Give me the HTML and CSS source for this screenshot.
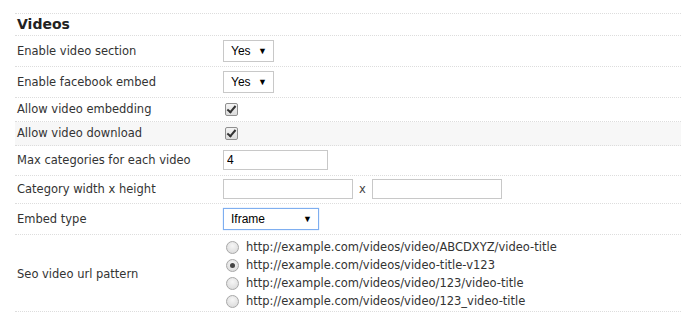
FILE: index.html
```html
<!DOCTYPE html>
<html>
<head>
    <title>Videos settings</title>
    <link rel="stylesheet" href="styles.css">
</head>
<body>
    <div class="settings">
        <h2 class="section-title">Videos</h2>

        <div class="row row-select">
            <div class="label">Enable video section</div>
            <div class="value">
                <div class="fake-select small"><span>Yes</span><span class="arrow">&#9660;</span></div>
            </div>
        </div>
        <div class="row row-select">
            <div class="label">Enable facebook embed</div>
            <div class="value">
                <div class="fake-select small"><span>Yes</span><span class="arrow">&#9660;</span></div>
            </div>
        </div>
        <div class="row row-check">
            <div class="label">Allow video embedding</div>
            <div class="value"><span class="checkbox checked"></span></div>
        </div>
        <div class="row row-check alt">
            <div class="label">Allow video download</div>
            <div class="value"><span class="checkbox checked"></span></div>
        </div>
        <div class="row row-input">
            <div class="label">Max categories for each video</div>
            <div class="value"><input type="text" class="text-input short" value="4"></div>
        </div>
        <div class="row row-input2">
            <div class="label">Category width x height</div>
            <div class="value">
                <input type="text" class="text-input medium">
                <span class="times">x</span>
                <input type="text" class="text-input medium">
            </div>
        </div>
        <div class="row row-select">
            <div class="label">Embed type</div>
            <div class="value">
                <div class="fake-select wide focused"><span>Iframe</span><span class="arrow">&#9660;</span></div>
            </div>
        </div>
        <div class="row row-radio">
            <div class="label">Seo video url pattern</div>
            <div class="value radios">
                <label class="radio-line"><span class="radio"></span>http://example.com/videos/video/ABCDXYZ/video-title</label>
                <label class="radio-line"><span class="radio selected"></span>http://example.com/videos/video-title-v123</label>
                <label class="radio-line"><span class="radio"></span>http://example.com/videos/video/123/video-title</label>
                <label class="radio-line"><span class="radio"></span>http://example.com/videos/video/123_video-title</label>
            </div>
        </div>
    </div>
</body>
</html>
```

FILE: styles.css
```css
body {
    margin: 0;
    padding: 13px 0 0 15px;
    font-family: "DejaVu Sans", Verdana, sans-serif;
    font-size: 11.5px;
    line-height: 13px;
    color: #333;
    background: #fff;
}
.settings {
    border-top: 1px dotted #ddd;
}
.section-title {
    margin: 0;
    height: 21px;
    padding-left: 2px;
    font-size: 14px;
    line-height: 21px;
    font-weight: bold;
    color: #222;
    border-bottom: 1px dotted #ddd;
}
.row {
    display: grid;
    grid-template-columns: 208px 1fr;
    align-items: center;
    border-bottom: 1px dotted #ddd;
}
.row.alt {
    background-color: #f7f7f7;
}
.label {
    padding-left: 2px;
}
.value {
    display: flex;
    align-items: center;
}
.row-select {
    padding: 4px 0;
}
.row-check {
    padding: 5px 0;
}
.row-input {
    padding: 4px 0 5px;
}
.row-input2 {
    padding: 3px 0 4px;
}
.row-radio {
    padding: 3px 0 1px;
}
.fake-select {
    box-sizing: border-box;
    height: 22px;
    display: flex;
    align-items: center;
    justify-content: space-between;
    padding: 0 6px 0 7px;
    border: 1px solid #c8c8c8;
    background: #fff;
    font-family: "Liberation Sans", Arial, sans-serif;
    font-size: 12px;
    color: #000;
}
.fake-select.small {
    width: 51px;
}
.fake-select.wide {
    width: 96px;
}
.fake-select.focused {
    border-color: #7eaef0;
    box-shadow: 0 0 1px #9cc2f5;
}
.arrow {
    font-size: 9px;
}
.checkbox {
    box-sizing: border-box;
    width: 13px;
    height: 13px;
    margin-left: 2px;
    border: 1px solid #8f8f8f;
    border-radius: 2px;
    background: linear-gradient(#f4f4f4, #dcdcdc);
    position: relative;
}
.checkbox.checked::after {
    content: "";
    position: absolute;
    left: 3px;
    top: 0px;
    width: 3px;
    height: 7px;
    border: solid #333;
    border-width: 0 2px 2px 0;
    transform: rotate(40deg);
}
.text-input {
    box-sizing: border-box;
    height: 20px;
    padding: 0 3px;
    border: 1px solid #c8c8c8;
    font-family: "Liberation Sans", Arial, sans-serif;
    font-size: 12px;
    color: #000;
    outline: none;
}
.text-input.short {
    width: 105px;
}
.text-input.medium {
    width: 130px;
}
.times {
    width: 19px;
    text-align: center;
    color: #444;
}
.radios {
    flex-direction: column;
    align-items: flex-start;
}
.radio-line {
    display: flex;
    align-items: center;
    height: 18px;
}
.radio {
    box-sizing: border-box;
    width: 13px;
    height: 13px;
    margin: 0 7px 0 3px;
    border: 1px solid #a8a8a8;
    border-radius: 50%;
    background: radial-gradient(circle at 50% 35%, #f6f6f6, #d6d6d6);
    position: relative;
}
.radio.selected::after {
    content: "";
    position: absolute;
    left: 3px;
    top: 3px;
    width: 5px;
    height: 5px;
    border-radius: 50%;
    background: #444;
}
```
